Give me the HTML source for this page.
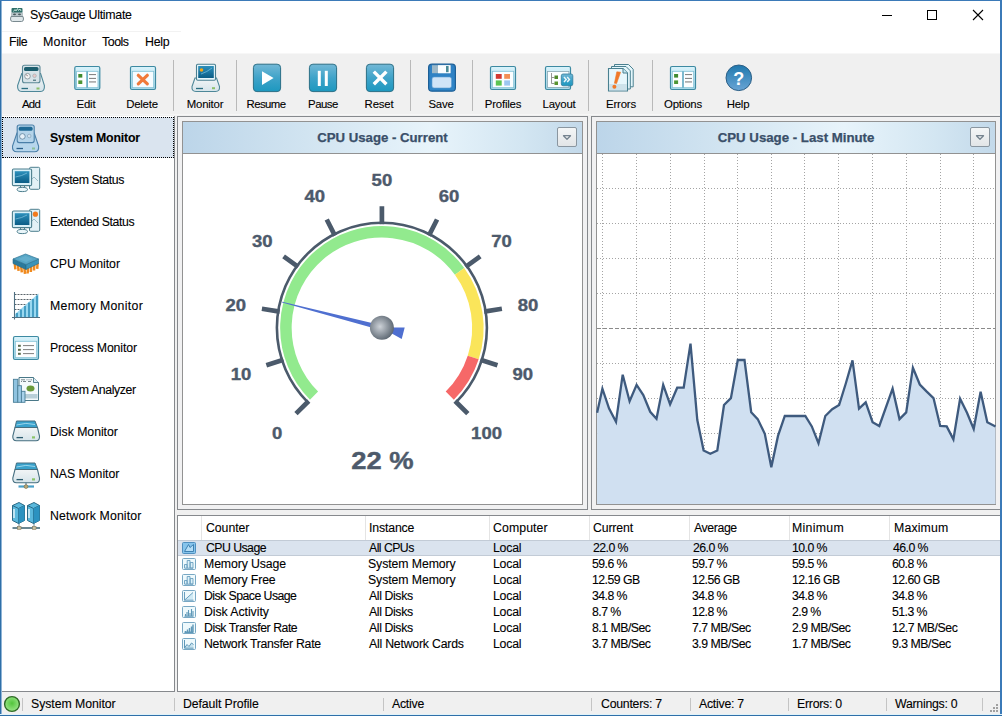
<!DOCTYPE html>
<html><head><meta charset="utf-8">
<style>
*{margin:0;padding:0;box-sizing:border-box}
html,body{width:1002px;height:716px;overflow:hidden;background:#f0f0f0;font-family:"Liberation Sans",sans-serif;font-size:12px;color:#000;-webkit-text-stroke:0.1px #000}
svg text{-webkit-text-stroke:0}
.a{position:absolute}
svg{position:absolute;overflow:visible}
#win{position:absolute;left:0;top:0;width:1002px;height:716px;background:#f0f0f0;overflow:hidden}
.mi{top:35px;font-size:12.4px;letter-spacing:-0.25px;line-height:14px;color:#000}
.tl{font-size:11.4px;letter-spacing:-0.2px;line-height:13px;color:#000;text-align:center;width:80px;top:98px;white-space:nowrap}
.sep{width:1px;background:#b9b9b9;top:60px;height:51px}
.si{left:50px;font-size:12.3px;letter-spacing:-0.25px;line-height:14px;white-space:nowrap;color:#000}
.frame{border:1px solid #86898d;background:#f1f1f2}
.box{border:1px solid #929292;background:#fff}
.hdr{height:32px;border-bottom:1px solid #929292;background:linear-gradient(90deg,#bcd5e9 0%,#d4e6f2 35%,#e8f4fb 62%,#d3e6f2 85%,#c3d9ea 100%);font-weight:bold;font-size:13.3px;color:#3b4f6b;text-align:center;line-height:31px;white-space:nowrap}
.dd{width:20px;height:20px;border:1px solid #8a96a0;border-radius:2px;background:linear-gradient(#f4f6f7,#e2e5e7)}
.st{top:697px;font-size:12.3px;letter-spacing:-0.25px;line-height:14px;white-space:nowrap}
.ss{width:1px;height:13px;top:698px;background:#c4c4c4}
.th{top:521px;font-size:12.3px;letter-spacing:-0.25px;line-height:14px;white-space:nowrap}
.hs{top:516px;width:1px;height:24px;background:#e4e4e4}
.td{font-size:12.3px;letter-spacing:-0.25px;line-height:14px;white-space:nowrap}
</style></head><body>
<div id="win">
<!-- chrome -->
<div class="a" style="left:1px;top:1px;width:999px;height:30px;background:#fff"></div>
<div class="a" style="left:1px;top:31px;width:999px;height:22px;background:#fff"></div>
<div class="a" style="left:1px;top:31px;width:180px;height:1px;background:#f2f2f2"></div>
<div class="a" style="left:1px;top:53px;width:999px;height:62px;background:#f0f0f0"></div>
<div class="a" style="left:1px;top:53px;width:999px;height:1px;background:#f7f7f7"></div>
<div class="a" style="left:1px;top:114px;width:999px;height:1px;background:#f6f6f6"></div>
<div class="a" style="left:30px;top:8px;font-size:12.4px;letter-spacing:-0.3px;line-height:14px">SysGauge Ultimate</div>
<svg style="left:0;top:0" width="30" height="30" viewBox="0 0 30 30">
 <rect x="11.5" y="8" width="11" height="5" rx="1" fill="#2f6f6a"/>
 <path d="M13.5,11.5l1.5,-2l1,1.5l1.5,-2.5l1,2l1.5,-1.5l1,2" stroke="#bfe0d8" stroke-width="1" fill="none"/>
 <rect x="11" y="12.5" width="12" height="4" fill="#b8c4c8"/>
 <ellipse cx="14.5" cy="14.3" rx="1.5" ry="0.9" fill="#4a5a5e"/><ellipse cx="19.5" cy="14.3" rx="1.5" ry="0.9" fill="#4a5a5e"/>
 <path d="M11,16.5 L10.5,19 Q10.5,21.5 12.5,21.5 H21.5 Q23.5,21.5 23.5,19 L23,16.5Z" fill="#dfe7ea" stroke="#7a8a90" stroke-width="1"/>
</svg>
<svg style="left:870px;top:0" width="132" height="32" viewBox="870 0 132 32">
 <path d="M882,15.5H892" stroke="#000" stroke-width="1"/>
 <rect x="927.5" y="10.5" width="9" height="9" stroke="#000" stroke-width="1" fill="none"/>
 <path d="M973,10L983,20M983,10L973,20" stroke="#000" stroke-width="1.1"/>
</svg>
<div class="a mi" style="left:9px;letter-spacing:-0.42px">File</div>
<div class="a mi" style="left:43px;letter-spacing:0.3px">Monitor</div>
<div class="a mi" style="left:102px;letter-spacing:-0.47px">Tools</div>
<div class="a mi" style="left:145px">Help</div>
<!-- toolbar separators -->
<div class="a sep" style="left:173px"></div>
<div class="a sep" style="left:236px"></div>
<div class="a sep" style="left:410px"></div>
<div class="a sep" style="left:472px"></div>
<div class="a sep" style="left:588px"></div>
<div class="a sep" style="left:652px"></div>
<!-- toolbar labels -->
<div class="a tl" style="left:-9px;letter-spacing:-0.7px">Add</div>
<div class="a tl" style="left:46px">Edit</div>
<div class="a tl" style="left:102px">Delete</div>
<div class="a tl" style="left:165px">Monitor</div>
<div class="a tl" style="left:226px;letter-spacing:-0.6px">Resume</div>
<div class="a tl" style="left:283px;letter-spacing:-0.5px">Pause</div>
<div class="a tl" style="left:339px">Reset</div>
<div class="a tl" style="left:401px">Save</div>
<div class="a tl" style="left:463px">Profiles</div>
<div class="a tl" style="left:519px">Layout</div>
<div class="a tl" style="left:581px">Errors</div>
<div class="a tl" style="left:643px">Options</div>
<div class="a tl" style="left:698px">Help</div>
<svg style="left:0;top:0" width="1" height="1">
<defs>
 <linearGradient id="tealbtn" x1="0" y1="0" x2="0" y2="1"><stop offset="0" stop-color="#73b8d6"/><stop offset="0.5" stop-color="#3fa3c9"/><stop offset="1" stop-color="#1d98bf"/></linearGradient>
 <linearGradient id="winttl" x1="0" y1="0" x2="0" y2="1"><stop offset="0" stop-color="#d9f3fb"/><stop offset="1" stop-color="#a9d9ea"/></linearGradient>
 <linearGradient id="scr" x1="0" y1="0" x2="0" y2="1"><stop offset="0" stop-color="#2d90bb"/><stop offset="1" stop-color="#0b5d86"/></linearGradient>
 <linearGradient id="floppy" x1="0" y1="0" x2="0" y2="1"><stop offset="0" stop-color="#2e7fc2"/><stop offset="1" stop-color="#2f86c8"/></linearGradient>
 <linearGradient id="helpg" x1="0" y1="0" x2="0" y2="1"><stop offset="0" stop-color="#1f78ad"/><stop offset="1" stop-color="#6aa5d5"/></linearGradient>
 <linearGradient id="diskbase" x1="0" y1="0" x2="0" y2="1"><stop offset="0" stop-color="#f2f5f6"/><stop offset="1" stop-color="#d6e4ea"/></linearGradient>
</defs>
</svg>
<!-- Add -->
<svg style="left:12px;top:58px" width="40" height="40" viewBox="0 0 40 40">
 <path d="M9.8,15.5 L5.6,27.5 Q5.2,33.5 9.8,33.5 H28.5 Q32.8,33.5 32.4,27.5 L28.6,15.5Z" fill="url(#diskbase)" stroke="#4d8798" stroke-width="1.1"/>
 <path d="M9.5,30.5 H16" stroke="#2b6e80" stroke-width="1.3"/><rect x="24.5" y="29.5" width="3" height="2" fill="#8cbf6a"/>
 <rect x="10.5" y="7.2" width="17.5" height="17.5" rx="2" fill="#d7e3e8" stroke="#5b8896" stroke-width="1.1"/>
 <rect x="12" y="9" width="14.5" height="4" rx="1.5" fill="#1c5e6e"/>
 <circle cx="15.5" cy="18.2" r="2.8" fill="#f5f5f5" stroke="#7a8c92" stroke-width="0.8"/><path d="M15.5,18.2l-1,-1.6" stroke="#6a4a4a" stroke-width="0.8"/>
 <circle cx="22.5" cy="17.8" r="1.8" fill="#e8c8c8" stroke="#9aa8ac" stroke-width="0.6"/>
 <path d="M21,22.2h3" stroke="#2b5a66" stroke-width="1"/>
</svg>
<!-- Edit -->
<svg style="left:68px;top:58px" width="40" height="40" viewBox="0 0 40 40">
 <rect x="6.8" y="8.5" width="25" height="23" rx="1.5" fill="url(#winttl)" stroke="#3d8aa2" stroke-width="1.2"/>
 <rect x="8.6" y="13.3" width="21.4" height="16.4" fill="#fcfeff" stroke="#7fc0d4" stroke-width="0.8"/>
 <rect x="18.3" y="13.3" width="1.6" height="16.4" fill="#5ea9c2"/>
 <rect x="10.3" y="16" width="4" height="3.6" fill="#3f8a2e"/><rect x="10.3" y="22.4" width="4" height="3.6" fill="#4d9635"/>
 <path d="M21,16.6h7M21,20.4h7" stroke="#6a6a6a" stroke-width="0.9"/><path d="M21,23.9h7" stroke="#a8a8a8" stroke-width="1.6"/>
</svg>
<!-- Delete -->
<svg style="left:123px;top:58px" width="40" height="40" viewBox="0 0 40 40">
 <rect x="7.5" y="8.5" width="25" height="23" rx="1.5" fill="url(#winttl)" stroke="#3d8aa2" stroke-width="1.2"/>
 <rect x="9.3" y="13.3" width="21.4" height="16.4" fill="#f6fcff" stroke="#7fc0d4" stroke-width="0.8"/>
 <path d="M15.3,17.3L24.3,25.8M24.3,17.3L15.3,25.8" stroke="#f07a3a" stroke-width="3.2" stroke-linecap="round"/>
</svg>
<!-- Monitor -->
<svg style="left:185px;top:58px" width="40" height="40" viewBox="0 0 40 40">
 <path d="M10,20 L7,28.5 Q6.5,33.5 11,33.5 H30.5 Q35,33.5 34.5,28.5 L31.5,20Z" fill="url(#diskbase)" stroke="#4d8798" stroke-width="1.1"/>
 <path d="M11,30.5 H18" stroke="#2b6e80" stroke-width="1.3"/><rect x="27" y="29.2" width="3" height="2" fill="#8cbf6a"/>
 <rect x="11.5" y="6.2" width="19" height="16" rx="1.2" fill="#e6f6fb" stroke="#4a7f90" stroke-width="1.1"/>
 <rect x="13.2" y="8" width="15.6" height="12" fill="url(#scr)"/>
 <path d="M16,16 Q22,14 27,10" stroke="#7cc4e2" stroke-width="1" fill="none" opacity="0.7"/>
 <circle cx="16.5" cy="12" r="1.8" fill="#f2a516"/>
</svg>
<!-- Resume -->
<svg style="left:247px;top:58px" width="40" height="40" viewBox="0 0 40 40">
 <rect x="6.4" y="6.2" width="27.2" height="27.4" rx="3.5" fill="url(#tealbtn)" stroke="#2b6f86" stroke-width="1"/>
 <path d="M15,13.3V26.9L26.6,20Z" fill="#fff"/>
</svg>
<!-- Pause -->
<svg style="left:303px;top:58px" width="40" height="40" viewBox="0 0 40 40">
 <rect x="6.4" y="6.2" width="27.2" height="27.4" rx="3.5" fill="url(#tealbtn)" stroke="#2b6f86" stroke-width="1"/>
 <rect x="14.8" y="12.8" width="3" height="15.2" fill="#fff"/><rect x="21.8" y="12.8" width="3" height="15.2" fill="#fff"/>
</svg>
<!-- Reset -->
<svg style="left:360px;top:58px" width="40" height="40" viewBox="0 0 40 40">
 <rect x="6.4" y="6.2" width="27.2" height="27.4" rx="3.5" fill="url(#tealbtn)" stroke="#2b6f86" stroke-width="1"/>
 <path d="M13.8,13.6L26.4,26.2M26.4,13.6L13.8,26.2" stroke="#fff" stroke-width="3.4"/>
</svg>
<!-- Save -->
<svg style="left:422px;top:58px" width="40" height="40" viewBox="0 0 40 40">
 <rect x="6.6" y="6.2" width="26.8" height="27" rx="3.5" fill="url(#floppy)" stroke="#1d5f96" stroke-width="1.2"/>
 <rect x="10" y="7.2" width="18.5" height="8" fill="#9cb8c8"/><rect x="16" y="7.2" width="12.5" height="8" fill="#fafdff"/>
 <rect x="24" y="8" width="2.6" height="6.2" fill="#4a8a96"/>
 <rect x="10" y="19" width="19.5" height="11" rx="2" fill="#cfe4f7" stroke="#5a9ad0" stroke-width="0.6"/>
</svg>
<!-- Profiles -->
<svg style="left:483px;top:58px" width="40" height="40" viewBox="0 0 40 40">
 <rect x="7.5" y="8.5" width="25" height="23" rx="1.5" fill="url(#winttl)" stroke="#3d8aa2" stroke-width="1.2"/>
 <rect x="9.3" y="13.3" width="21.4" height="16.4" fill="#fbfeff" stroke="#7fc0d4" stroke-width="0.8"/>
 <rect x="12.8" y="16" width="5.9" height="4.8" fill="#d23a32"/><rect x="21.2" y="16" width="5.8" height="4.8" fill="#f28f55"/>
 <rect x="12.8" y="22.4" width="5.9" height="5.2" fill="#5cc451"/><rect x="21.2" y="22.4" width="5.8" height="5.2" fill="#9cc6f0"/>
</svg>
<!-- Layout -->
<svg style="left:539px;top:58px" width="40" height="40" viewBox="0 0 40 40">
 <rect x="6.5" y="8.5" width="25" height="23" rx="1.5" fill="url(#winttl)" stroke="#3d8aa2" stroke-width="1.2"/>
 <rect x="8.5" y="13.5" width="21.4" height="16" fill="#fbfeff" stroke="#8aa8b4" stroke-width="0.8"/>
 <path d="M12.5,15V25.5H15.5M12.5,19.5H15.5" stroke="#8a8a8a" stroke-width="0.9" fill="none"/>
 <rect x="15.5" y="17.5" width="3.5" height="3.5" fill="#4f8a2a"/><rect x="15.5" y="23.5" width="3.5" height="3.5" fill="#5a9430"/>
 <rect x="22.3" y="16" width="11.5" height="11.8" rx="1.8" fill="url(#tealbtn)" stroke="#2f7c9c" stroke-width="0.8"/>
 <path d="M25,19l2.2,2.5l-2.2,2.5M28.2,19l2.2,2.5l-2.2,2.5" stroke="#e8f6fb" stroke-width="1.5" fill="none"/>
</svg>
<!-- Errors -->
<svg style="left:601px;top:58px" width="40" height="40" viewBox="0 0 40 40">
 <path d="M13.5,6.5H27.5L32.2,11.2V28.8H13.5Z" fill="#e4f6fb" stroke="#4a8090" stroke-width="1"/>
 <path d="M10.5,8.5H25L29.3,12.8V31H10.5Z" fill="#e4f6fb" stroke="#4a8090" stroke-width="1"/>
 <path d="M7.5,10.5H22L26.5,15V33H7.5Z" fill="#e8f7fc" stroke="#4a8090" stroke-width="1.1"/>
 <path d="M22,10.5V15H26.5" fill="#c6e8f2" stroke="#4a8090" stroke-width="1"/>
 <rect x="8.2" y="26" width="17.6" height="6.5" fill="#bcd4de" opacity="0.6"/>
 <path d="M15.8,13.8 L19.6,14.2 L15.6,25.5 L13.4,25.2Z" fill="#f07a2a" stroke="#f07a2a" stroke-width="0.6" stroke-linejoin="round"/>
 <circle cx="13.4" cy="28.8" r="2" fill="#f07a2a"/>
</svg>
<!-- Options -->
<svg style="left:663px;top:58px" width="40" height="40" viewBox="0 0 40 40">
 <rect x="7.5" y="8.5" width="25" height="23" rx="1.5" fill="url(#winttl)" stroke="#3d8aa2" stroke-width="1.2"/>
 <rect x="9.3" y="13.3" width="21.4" height="16.4" fill="#fcfeff" stroke="#7fc0d4" stroke-width="0.8"/>
 <rect x="19.2" y="13.3" width="1.6" height="16.4" fill="#5ea9c2"/>
 <rect x="11.1" y="16" width="4" height="3.6" fill="#3f8a2e"/><rect x="11.1" y="22.4" width="4" height="3.6" fill="#4d9635"/>
 <path d="M22,16.6h7M22,20.4h7" stroke="#6a6a6a" stroke-width="0.9"/><path d="M22,23.9h7" stroke="#a8a8a8" stroke-width="1.6"/>
</svg>
<!-- Help -->
<svg style="left:718px;top:58px" width="40" height="40" viewBox="0 0 40 40">
 <circle cx="20.8" cy="19.8" r="12.8" fill="url(#helpg)" stroke="#2c5f86" stroke-width="1"/>
 <text x="20.8" y="27.2" text-anchor="middle" font-family="Liberation Sans" font-weight="bold" font-size="18" fill="#fff">?</text>
</svg>
<!-- sidebar -->
<div class="a" style="left:1px;top:116px;width:174px;height:576px;background:#fff"></div>
<div class="a" style="left:174px;top:116px;width:1px;height:576px;background:#86898d"></div>
<div class="a" style="left:1px;top:691px;width:174px;height:1px;background:#86898d"></div>
<div class="a" style="left:2px;top:117px;width:172px;height:41px;background:#dae4ef;border:1px dotted #000"></div>
<div class="a si" style="left:50px;top:131px;font-weight:bold;letter-spacing:-0.17px">System Monitor</div>
<div class="a si" style="top:173px;letter-spacing:-0.41px">System Status</div>
<div class="a si" style="top:215px;letter-spacing:-0.4px">Extended Status</div>
<div class="a si" style="top:257px;letter-spacing:-0.04px">CPU Monitor</div>
<div class="a si" style="top:299px;letter-spacing:0.3px">Memory Monitor</div>
<div class="a si" style="top:341px;letter-spacing:-0.13px">Process Monitor</div>
<div class="a si" style="top:383px;letter-spacing:-0.39px">System Analyzer</div>
<div class="a si" style="top:425px;letter-spacing:-0.04px">Disk Monitor</div>
<div class="a si" style="top:467px;letter-spacing:-0.03px">NAS Monitor</div>
<div class="a si" style="top:509px;letter-spacing:0.13px">Network Monitor</div>
<!-- s1 system monitor (blue tinted) -->
<svg style="left:6px;top:118px" width="40" height="40" viewBox="0 0 40 40">
 <path d="M11,15 L6.5,28 Q6,33.8 11,33.8 H28.5 Q33.2,33.8 32.6,28 L28.2,15Z" fill="#b7d6ec" stroke="#4a7fa8" stroke-width="1.1"/>
 <path d="M10.5,30.5 H17" stroke="#2a5f8a" stroke-width="1.3"/><rect x="26" y="29.5" width="3" height="2" fill="#8cbf9a"/>
 <rect x="11.2" y="7" width="17" height="17.6" rx="2" fill="#b5d4ea" stroke="#4a7fa8" stroke-width="1.1"/>
 <rect x="12.8" y="8.8" width="13.8" height="4" rx="1.5" fill="#1f6a96"/>
 <circle cx="16.4" cy="18.4" r="2.8" fill="#e6f0f8" stroke="#5a7f9a" stroke-width="0.8"/>
 <circle cx="23.2" cy="18" r="1.8" fill="#cfe0ee" stroke="#7a98ae" stroke-width="0.6"/>
</svg>
<!-- s2 system status -->
<svg style="left:6px;top:160px" width="40" height="40" viewBox="0 0 40 40">
 <rect x="23.5" y="7.3" width="10.2" height="22" rx="1.2" fill="#e2f1f6" stroke="#4d7f8e" stroke-width="1"/>
 <path d="M25,20 l3,-3 l4,4" stroke="#8ab0bc" stroke-width="0.8" fill="none"/>
 <rect x="6.4" y="9" width="19.2" height="16.6" rx="1.2" fill="#d8f0f8" stroke="#4d7f8e" stroke-width="1.1"/>
 <rect x="8.8" y="11.2" width="14.6" height="11.8" fill="url(#scr)"/>
 <path d="M9.5,17 Q16,16 21,13" stroke="#8ccbe4" stroke-width="0.9" fill="none" opacity="0.7"/>
 <path d="M14.5,25.6 V28 M18.5,25.6 V28" stroke="#4d7f8e" stroke-width="1"/>
 <ellipse cx="16.3" cy="29.5" rx="5.2" ry="2.1" fill="#eaf6fa" stroke="#4d7f8e" stroke-width="1"/>
</svg>
<!-- s3 extended status -->
<svg style="left:6px;top:202px" width="40" height="40" viewBox="0 0 40 40">
 <rect x="23.5" y="7.3" width="10.2" height="22" rx="1.2" fill="#e2f1f6" stroke="#4d7f8e" stroke-width="1"/>
 <path d="M25,20 l3,-3 l4,4" stroke="#8ab0bc" stroke-width="0.8" fill="none"/>
 <circle cx="29.4" cy="12.2" r="2.6" fill="#f27a1c"/>
 <rect x="6.4" y="9" width="19.2" height="16.6" rx="1.2" fill="#d8f0f8" stroke="#4d7f8e" stroke-width="1.1"/>
 <rect x="8.8" y="11.2" width="14.6" height="11.8" fill="url(#scr)"/>
 <path d="M9.5,17 Q16,16 21,13" stroke="#8ccbe4" stroke-width="0.9" fill="none" opacity="0.7"/>
 <path d="M14.5,25.6 V28 M18.5,25.6 V28" stroke="#4d7f8e" stroke-width="1"/>
 <ellipse cx="16.3" cy="29.5" rx="5.2" ry="2.1" fill="#eaf6fa" stroke="#4d7f8e" stroke-width="1"/>
</svg>
<!-- s4 cpu -->
<svg style="left:6px;top:244px" width="40" height="40" viewBox="0 0 40 40">
 <path d="M8.8,19.3l0.6,6M12.0,20.8l0.6,6M15.2,22.3l0.6,6M18.4,23.8l0.6,6M22.0,23.5l-0.4,6M25.2,22.0l-0.4,6M28.4,20.5l-0.4,6M31.6,18.9l-0.4,6" stroke="#f08a1e" stroke-width="2.5" fill="none"/>
 <path d="M7,15 L20,20.5 L20,25.5 L7,19.5Z" fill="#2a7a9c" stroke="#276a86" stroke-width="0.6"/>
 <path d="M20,20.5 L32.5,15 L32.5,19.5 L20,25.5Z" fill="#3a93b8" stroke="#276a86" stroke-width="0.6"/>
 <path d="M7,15 L19.5,10 L32.5,15 L20,20.5Z" fill="#57a6c6" stroke="#2f7595" stroke-width="0.7"/>
 <path d="M12,15 L19.5,12 L27,15 L20,18Z" fill="#6cb6d2" opacity="0.6"/>
</svg>
<!-- s5 memory -->
<svg style="left:6px;top:286px" width="40" height="40" viewBox="0 0 40 40">
 <path d="M8.5,8.5 H32 M8.5,13.5 H28 M8.5,18.5 H24 M8.5,23.5 H16" stroke="#5a646a" stroke-width="1" stroke-dasharray="2 1" fill="none"/>
 <path d="M8.5,28.5 L32.5,7.5 V31.5 H8.5Z" fill="#9ad8f0"/>
 <path d="M11,31.5V27 M15,31.5V23.5 M19,31.5V20 M23,31.5V16.5 M27,31.5V13 M31,31.5V9.5" stroke="#3190ba" stroke-width="1.6"/>
 <path d="M8.5,6 V33.5 M6,31.5 H34" stroke="#4e6f82" stroke-width="1.1"/>
</svg>
<!-- s6 process -->
<svg style="left:6px;top:328px" width="40" height="40" viewBox="0 0 40 40">
 <rect x="7.5" y="8.5" width="25" height="23" rx="1.5" fill="url(#winttl)" stroke="#3d8aa2" stroke-width="1.2"/>
 <rect x="9.3" y="13.3" width="21.4" height="16.4" fill="#fcfeff" stroke="#7fc0d4" stroke-width="0.8"/>
 <rect x="12" y="16.8" width="2.8" height="2" fill="#5a6a4a"/><rect x="12" y="20.8" width="2.8" height="2" fill="#5a6a4a"/><rect x="12" y="24.8" width="2.8" height="2" fill="#5a6a4a"/>
 <path d="M17,17.6h11M17,21.6h11M17,25.6h11" stroke="#707070" stroke-width="0.9"/>
</svg>
<!-- s7 analyzer -->
<svg style="left:6px;top:370px" width="40" height="40" viewBox="0 0 40 40">
 <path d="M13,7.5H27.5L32.5,12.5V30.5H13Z" fill="#f4fafc" stroke="#4a7888" stroke-width="1"/>
 <path d="M27.5,7.5V12.5H32.5" fill="#dfeff5" stroke="#4a7888" stroke-width="0.9"/>
 <path d="M15,9.8h4 M20.5,9.8h1 M22.5,9.8h1 M24.5,9.8h1.5 M15,11.5h1 M17,11.5h3 M22,11.5h3" stroke="#5a6a70" stroke-width="0.8"/>
 <ellipse cx="24.5" cy="18.5" rx="4" ry="3" fill="#6a9a3a"/>
 <rect x="19" y="24" width="12.5" height="4.5" fill="#b8cfd8"/>
 <rect x="7.4" y="9.3" width="4.4" height="23" fill="#8fc3e0" stroke="#4a7f98" stroke-width="0.9"/>
 <rect x="11.8" y="15.7" width="3.6" height="16.6" fill="#9ccbe6" stroke="#4a7f98" stroke-width="0.9"/>
 <rect x="15.4" y="21.3" width="3.6" height="11" fill="#a8d2ea" stroke="#4a7f98" stroke-width="0.9"/>
</svg>
<!-- s8 disk -->
<svg style="left:6px;top:412px" width="40" height="40" viewBox="0 0 40 40">
 <path d="M10.5,9 H29 L31.5,15.5 V15.5 H9Z" fill="#3aa2cc" stroke="#466f80" stroke-width="1"/>
 <path d="M10.5,13 Q20,10 29,12.5" stroke="#9ad6ec" stroke-width="1" fill="none"/>
 <path d="M9,15.5 L6.8,24 Q6.5,28.8 10.5,28.8 H30 Q33.8,28.8 33.5,24 L31.5,15.5Z" fill="url(#diskbase)" stroke="#466f80" stroke-width="1.1"/>
 <path d="M10.5,25.6 H17" stroke="#2b5a6e" stroke-width="1.3"/><rect x="26" y="24.3" width="3" height="2.2" fill="#8cc46a"/>
</svg>
<!-- s9 nas -->
<svg style="left:6px;top:454px" width="40" height="40" viewBox="0 0 40 40">
 <path d="M10.5,9 H29 L31.5,15.5 H9Z" fill="#3aa2cc" stroke="#466f80" stroke-width="1"/>
 <path d="M10.5,13 Q20,10 29,12.5" stroke="#9ad6ec" stroke-width="1" fill="none"/>
 <path d="M9,15.5 L6.8,24 Q6.5,28.8 10.5,28.8 H30 Q33.8,28.8 33.5,24 L31.5,15.5Z" fill="url(#diskbase)" stroke="#466f80" stroke-width="1.1"/>
 <path d="M10.5,25.6 H17" stroke="#2b5a6e" stroke-width="1.3"/><rect x="26" y="24.3" width="3" height="2.2" fill="#8cc46a"/>
 <path d="M20,28.8 V31.5" stroke="#466f80" stroke-width="1"/>
 <path d="M12.5,32.5 H28" stroke="#4aa0c8" stroke-width="2.2"/>
 <circle cx="20" cy="32.6" r="1.9" fill="#b8a878" stroke="#7a6a40" stroke-width="0.6"/>
</svg>
<!-- s10 network -->
<svg style="left:6px;top:496px" width="40" height="40" viewBox="0 0 40 40">
 <path d="M13,26 V31.5 M28,26 V31.5" stroke="#6a8a96" stroke-width="1"/>
 <path d="M6.5,32 H34" stroke="#5a7a86" stroke-width="1.8"/>
 <rect x="11.5" y="30.5" width="3.5" height="3" fill="#c8c0a0" stroke="#7a7050" stroke-width="0.5"/><rect x="26.5" y="30.5" width="3.5" height="3" fill="#c8c0a0" stroke="#7a7050" stroke-width="0.5"/>
 <path d="M6.5,9.5 L13,6.5 L18.5,9.5 V24.5 L12.5,27.5 L6.5,24.5Z" fill="#5ab8dc" stroke="#2a6a86" stroke-width="1"/>
 <path d="M6.5,9.5 L12.5,12.5 L18.5,9.5 M12.5,12.5 V27.5" stroke="#2a6a86" stroke-width="1" fill="none"/>
 <path d="M12.5,12.5 L18.5,9.5 V24.5 L12.5,27.5Z" fill="#2b92c0"/>
 <path d="M8,13 V22" stroke="#e0f4fb" stroke-width="1.5"/>
 <path d="M21.5,9.5 L28,6.5 L33.5,9.5 V24.5 L27.5,27.5 L21.5,24.5Z" fill="#5ab8dc" stroke="#2a6a86" stroke-width="1"/>
 <path d="M21.5,9.5 L27.5,12.5 L33.5,9.5 M27.5,12.5 V27.5" stroke="#2a6a86" stroke-width="1" fill="none"/>
 <path d="M27.5,12.5 L33.5,9.5 V24.5 L27.5,27.5Z" fill="#2b92c0"/>
 <path d="M23,13 V22" stroke="#e0f4fb" stroke-width="1.5"/>
</svg>
<!-- gauge panel -->
<div class="a frame" style="left:177px;top:116px;width:411px;height:394px"></div>
<div class="a box" style="left:182px;top:121px;width:401px;height:384px"></div>
<div class="a hdr" style="left:183px;top:122px;width:399px"></div><svg style="left:183px;top:122px" width="399" height="32" viewBox="0 0 399 32"><text x="134.2" y="19.7" textLength="130.5" lengthAdjust="spacingAndGlyphs" font-family="Liberation Sans" font-weight="bold" font-size="12.4" fill="#3a4f69" stroke="#3a4f69" stroke-width="0.25">CPU Usage - Current</text></svg>
<div class="a dd" style="left:557px;top:127px"></div><svg style="left:557px;top:127px" width="20" height="19" viewBox="0 0 20 19"><path d="M6.5,8.7H13.5L10,12.3Z" fill="none" stroke="#75838f" stroke-width="1.3" stroke-linejoin="round"/></svg>
<svg style="left:183px;top:154px" width="399" height="350" viewBox="183 154 399 350"><defs><radialGradient id="hub" cx="0.42" cy="0.45" r="0.62"><stop offset="0" stop-color="#cdd2d8"/><stop offset="1" stop-color="#56616c"/></radialGradient></defs><path d="M314.02,395.68 A96,96 0 1 1 459.57,271.37" stroke="#92ea8e" stroke-width="11.5" fill="none"/><path d="M459.57,271.37 A96,96 0 0 1 473.20,357.47" stroke="#fae55a" stroke-width="11.5" fill="none"/><path d="M473.20,357.47 A96,96 0 0 1 449.78,395.68" stroke="#f66868" stroke-width="11.5" fill="none"/><path d="M307.65,402.05 A105,105 0 1 1 456.15,402.05" stroke="#4b5a6b" stroke-width="2.6" fill="none"/><path d="M308.71,400.99L295.99,413.71M283.47,359.78L266.35,365.35M279.67,311.61L261.90,308.79M298.17,266.96L283.60,256.38M334.91,235.58L326.74,219.54M381.90,224.30L381.90,206.30M428.89,235.58L437.06,219.54M465.63,266.96L480.20,256.38M484.13,311.61L501.90,308.79M480.33,359.78L497.45,365.35M455.09,400.99L467.81,413.71" stroke="#4b5a6b" stroke-width="4.7" fill="none"/><g font-family="Liberation Sans" font-weight="bold" font-size="15.8" fill="#4d5a6b" stroke="#4d5a6b" stroke-width="0.35"><text x="272.1" y="439.0" textLength="10.3" lengthAdjust="spacingAndGlyphs">0</text><text x="230.8" y="380.0" textLength="20.6" lengthAdjust="spacingAndGlyphs">10</text><text x="225.4" y="311.1" textLength="20.6" lengthAdjust="spacingAndGlyphs">20</text><text x="251.9" y="247.3" textLength="20.6" lengthAdjust="spacingAndGlyphs">30</text><text x="304.4" y="202.4" textLength="20.6" lengthAdjust="spacingAndGlyphs">40</text><text x="371.6" y="186.3" textLength="20.6" lengthAdjust="spacingAndGlyphs">50</text><text x="438.8" y="202.4" textLength="20.6" lengthAdjust="spacingAndGlyphs">60</text><text x="491.3" y="247.3" textLength="20.6" lengthAdjust="spacingAndGlyphs">70</text><text x="517.8" y="311.1" textLength="20.6" lengthAdjust="spacingAndGlyphs">80</text><text x="512.4" y="380.0" textLength="20.6" lengthAdjust="spacingAndGlyphs">90</text><text x="471.1" y="439.0" textLength="30.9" lengthAdjust="spacingAndGlyphs">100</text></g><polygon points="282.24,301.80 382.52,325.38 392.27,327.62 404.70,327.46 401.72,339.08 390.90,332.95 381.28,330.22 282.04,302.57" fill="#4f6fd0"/><circle cx="381.9" cy="327.8" r="12" fill="url(#hub)"/><text x="351.2" y="469.3" textLength="62.4" lengthAdjust="spacingAndGlyphs" font-family="Liberation Sans" font-weight="bold" font-size="24.4" fill="#4d5a6b" stroke="#4d5a6b" stroke-width="0.4">22 %</text></svg>
<!-- chart panel -->
<div class="a frame" style="left:591px;top:116px;width:411px;height:394px"></div>
<div class="a box" style="left:596px;top:121px;width:400px;height:384px"></div>
<div class="a hdr" style="left:597px;top:122px;width:398px"></div><svg style="left:597px;top:122px" width="398" height="32" viewBox="0 0 398 32"><text x="120.7" y="19.7" textLength="156.7" lengthAdjust="spacingAndGlyphs" font-family="Liberation Sans" font-weight="bold" font-size="12.4" fill="#3a4f69" stroke="#3a4f69" stroke-width="0.25">CPU Usage - Last Minute</text></svg>
<div class="a dd" style="left:970px;top:127px"></div><svg style="left:970px;top:127px" width="20" height="19" viewBox="0 0 20 19"><path d="M6.5,8.7H13.5L10,12.3Z" fill="none" stroke="#75838f" stroke-width="1.3" stroke-linejoin="round"/></svg>
<svg style="left:597px;top:154px" width="398" height="350" viewBox="597 154 398 350"><path d="M602.5,154V504M636.5,154V504M670.5,154V504M704.5,154V504M737.5,154V504M771.5,154V504M804.5,154V504M838.5,154V504M872.5,154V504M906.5,154V504M940.5,154V504M973.5,154V504" stroke="#a4a4a4" stroke-width="1" stroke-dasharray="1 2" fill="none"/><path d="M597,188.5H995M597,223.5H995M597,258.5H995M597,293.5H995M597,363.5H995M597,398.5H995M597,433.5H995M597,468.5H995" stroke="#a4a4a4" stroke-width="1" stroke-dasharray="1 2" fill="none"/><path d="M597,328.5H995" stroke="#8a8a8a" stroke-width="1" stroke-dasharray="4 2" fill="none"/><path d="M597.1,412.8 L602.4,388.7 L609.1,408.6 L616.0,421.8 L622.7,374.7 L629.6,401.3 L636.6,384.9 L643.3,395.0 L650.2,411.8 L656.5,418.7 L663.2,384.9 L670.1,404.4 L677.2,387.7 L683.7,387.7 L690.5,343.6 L697.3,420.1 L703.6,450.5 L710.3,453.7 L717.3,450.5 L724.0,405.0 L730.9,398.1 L737.8,360.0 L744.5,360.0 L751.2,412.2 L757.7,419.1 L764.8,433.8 L771.3,467.3 L778.0,435.9 L784.8,416.0 L791.7,416.0 L798.6,416.0 L805.3,416.0 L811.8,426.4 L818.5,443.2 L825.3,416.0 L832.2,409.2 L839.1,405.0 L845.8,383.5 L852.5,360.4 L859.0,408.6 L865.7,402.3 L872.6,422.2 L879.3,426.0 L892.6,388.7 L899.5,419.1 L906.2,412.4 L912.9,367.7 L919.8,384.5 L926.5,391.4 L933.5,398.1 L940.2,426.0 L946.7,426.4 L953.4,439.4 L960.1,398.8 L967.0,412.8 L973.7,429.0 L980.6,391.8 L987.3,422.2 L995.5,426.4 L995.5,504 L597,504 Z" fill="#d0e0f1"/><path d="M597.1,412.8 L602.4,388.7 L609.1,408.6 L616.0,421.8 L622.7,374.7 L629.6,401.3 L636.6,384.9 L643.3,395.0 L650.2,411.8 L656.5,418.7 L663.2,384.9 L670.1,404.4 L677.2,387.7 L683.7,387.7 L690.5,343.6 L697.3,420.1 L703.6,450.5 L710.3,453.7 L717.3,450.5 L724.0,405.0 L730.9,398.1 L737.8,360.0 L744.5,360.0 L751.2,412.2 L757.7,419.1 L764.8,433.8 L771.3,467.3 L778.0,435.9 L784.8,416.0 L791.7,416.0 L798.6,416.0 L805.3,416.0 L811.8,426.4 L818.5,443.2 L825.3,416.0 L832.2,409.2 L839.1,405.0 L845.8,383.5 L852.5,360.4 L859.0,408.6 L865.7,402.3 L872.6,422.2 L879.3,426.0 L892.6,388.7 L899.5,419.1 L906.2,412.4 L912.9,367.7 L919.8,384.5 L926.5,391.4 L933.5,398.1 L940.2,426.0 L946.7,426.4 L953.4,439.4 L960.1,398.8 L967.0,412.8 L973.7,429.0 L980.6,391.8 L987.3,422.2 L995.5,426.4" stroke="#3e5a7e" stroke-width="2.3" stroke-linejoin="miter" fill="none"/></svg>
<!-- table -->
<div class="a" style="left:177px;top:515px;width:824px;height:177px;background:#fff;border:1px solid #86898d"></div>
<div class="a hs" style="left:201px"></div>
<div class="a hs" style="left:365px"></div>
<div class="a hs" style="left:489px"></div>
<div class="a hs" style="left:589px"></div>
<div class="a hs" style="left:689px"></div>
<div class="a hs" style="left:789px"></div>
<div class="a hs" style="left:889px"></div>
<div class="a" style="left:178px;top:540px;width:823px;height:16px;background:#dae3ee;border-top:1px solid #c2cbd6;border-bottom:1px solid #c2cbd6"></div>
<svg style="left:182px;top:542px" width="14" height="12" viewBox="0 0 14 12"><rect x="0.5" y="0.5" width="13" height="11" rx="1" fill="#86c4ec" stroke="#4f8fbf" stroke-width="1"/><path d="M2.5,9.5 L6.5,2.5 L8,5.5 L11.5,2.5 V9.5Z" fill="#b4ddf6" stroke="#3f82b3" stroke-width="1" stroke-linejoin="round"/></svg>
<svg style="left:182px;top:558px" width="14" height="12" viewBox="0 0 14 12"><rect x="0.5" y="0.5" width="13" height="11" rx="1" fill="#eef9fc" stroke="#78a8c4" stroke-width="1"/><path d="M2.5,10V6.5H5V10M5.2,10V2.5H8V10M8.2,10V4.5H11V10Z" stroke="#6a9fbf" stroke-width="0.9" fill="#dcf1f8"/><path d="M2.5,10.2H11.2" stroke="#6a9fbf" stroke-width="1"/></svg>
<svg style="left:182px;top:574px" width="14" height="12" viewBox="0 0 14 12"><rect x="0.5" y="0.5" width="13" height="11" rx="1" fill="#eef9fc" stroke="#78a8c4" stroke-width="1"/><path d="M2.5,10V6.5H5V10M5.2,10V2.5H8V10M8.2,10V4.5H11V10Z" stroke="#6a9fbf" stroke-width="0.9" fill="#dcf1f8"/><path d="M2.5,10.2H11.2" stroke="#6a9fbf" stroke-width="1"/></svg>
<svg style="left:182px;top:590px" width="14" height="12" viewBox="0 0 14 12"><rect x="0.5" y="0.5" width="13" height="11" rx="1" fill="#eef9fc" stroke="#78a8c4" stroke-width="1"/><path d="M2.5,10.2 L11,2.5 V10.2Z" fill="#cfeaf5"/><path d="M2.5,2V10.2H11.5M2.5,10.2L11,2.5" stroke="#6a9fbf" stroke-width="1" fill="none"/></svg>
<svg style="left:182px;top:606px" width="14" height="12" viewBox="0 0 14 12"><rect x="0.5" y="0.5" width="13" height="11" rx="1" fill="#eef9fc" stroke="#78a8c4" stroke-width="1"/><path d="M2.5,10.3H11.5M3.5,10V8M5,10V6M6.5,10V4M8,10V7M9.5,10V3M11,10V5" stroke="#5f98b8" stroke-width="1.1" fill="none"/></svg>
<svg style="left:182px;top:622px" width="14" height="12" viewBox="0 0 14 12"><rect x="0.5" y="0.5" width="13" height="11" rx="1" fill="#eef9fc" stroke="#78a8c4" stroke-width="1"/><path d="M2.5,10.3H11.5M3.5,10V9M5.5,10V7.5M7.5,10V6M9.5,10V4.5M11,10V2.5" stroke="#5f98b8" stroke-width="1.4" fill="none"/></svg>
<svg style="left:182px;top:638px" width="14" height="12" viewBox="0 0 14 12"><rect x="0.5" y="0.5" width="13" height="11" rx="1" fill="#eef9fc" stroke="#78a8c4" stroke-width="1"/><path d="M2.5,10.2L5,6.5L7,8.5L9.5,5L11.5,6.5V10.2Z" fill="#c6e2ee"/><path d="M2.5,2V10.2H11.5M2.5,10L5,6.5L7,8.5L9.5,5L11.5,6.5" stroke="#5f98b8" stroke-width="1" fill="none"/></svg>
<div class="a th" id="h0" style="left:206px;top:521px;letter-spacing:-0.050px">Counter</div>
<div class="a th" id="h1" style="left:369px;top:521px;letter-spacing:-0.150px">Instance</div>
<div class="a th" id="h2" style="left:493px;top:521px;letter-spacing:0.093px">Computer</div>
<div class="a th" id="h3" style="left:593px;top:521px;letter-spacing:-0.150px">Current</div>
<div class="a th" id="h4" style="left:694px;top:521px;letter-spacing:-0.400px">Average</div>
<div class="a th" id="h5" style="left:792px;top:521px;letter-spacing:0.300px">Minimum</div>
<div class="a th" id="h6" style="left:894px;top:521px;letter-spacing:0.150px">Maximum</div>
<div class="a td" id="r0c0" style="left:206px;top:541px;letter-spacing:-0.550px">CPU Usage</div>
<div class="a td" id="r0c1" style="left:369px;top:541px;letter-spacing:-0.550px">All CPUs</div>
<div class="a td" id="r0c2" style="left:493px;top:541px;letter-spacing:-0.225px">Local</div>
<div class="a td" id="r0c3" style="left:593px;top:541px;letter-spacing:-0.550px">22.0 %</div>
<div class="a td" id="r0c4" style="left:693px;top:541px;letter-spacing:-0.550px">26.0 %</div>
<div class="a td" id="r0c5" style="left:792px;top:541px;letter-spacing:-0.550px">10.0 %</div>
<div class="a td" id="r0c6" style="left:893px;top:541px;letter-spacing:-0.550px">46.0 %</div>
<div class="a td" id="r1c0" style="left:204px;top:557px;letter-spacing:-0.114px">Memory Usage</div>
<div class="a td" id="r1c1" style="left:368px;top:557px;letter-spacing:-0.092px">System Memory</div>
<div class="a td" id="r1c2" style="left:493px;top:557px;letter-spacing:-0.225px">Local</div>
<div class="a td" id="r1c3" style="left:592px;top:557px;letter-spacing:-0.550px">59.6 %</div>
<div class="a td" id="r1c4" style="left:692px;top:557px;letter-spacing:-0.550px">59.7 %</div>
<div class="a td" id="r1c5" style="left:792px;top:557px;letter-spacing:-0.550px">59.5 %</div>
<div class="a td" id="r1c6" style="left:892px;top:557px;letter-spacing:-0.550px">60.8 %</div>
<div class="a td" id="r2c0" style="left:204px;top:573px;letter-spacing:-0.140px">Memory Free</div>
<div class="a td" id="r2c1" style="left:368px;top:573px;letter-spacing:-0.092px">System Memory</div>
<div class="a td" id="r2c2" style="left:493px;top:573px;letter-spacing:-0.225px">Local</div>
<div class="a td" id="r2c3" style="left:592px;top:573px;letter-spacing:-0.550px">12.59 GB</div>
<div class="a td" id="r2c4" style="left:692px;top:573px;letter-spacing:-0.550px">12.56 GB</div>
<div class="a td" id="r2c5" style="left:792px;top:573px;letter-spacing:-0.550px">12.16 GB</div>
<div class="a td" id="r2c6" style="left:892px;top:573px;letter-spacing:-0.550px">12.60 GB</div>
<div class="a td" id="r3c0" style="left:204px;top:589px;letter-spacing:-0.550px">Disk Space Usage</div>
<div class="a td" id="r3c1" style="left:369px;top:589px;letter-spacing:-0.388px">All Disks</div>
<div class="a td" id="r3c2" style="left:493px;top:589px;letter-spacing:-0.225px">Local</div>
<div class="a td" id="r3c3" style="left:592px;top:589px;letter-spacing:-0.550px">34.8 %</div>
<div class="a td" id="r3c4" style="left:692px;top:589px;letter-spacing:-0.550px">34.8 %</div>
<div class="a td" id="r3c5" style="left:792px;top:589px;letter-spacing:-0.550px">34.8 %</div>
<div class="a td" id="r3c6" style="left:892px;top:589px;letter-spacing:-0.550px">34.8 %</div>
<div class="a td" id="r4c0" style="left:204px;top:605px;letter-spacing:-0.058px">Disk Activity</div>
<div class="a td" id="r4c1" style="left:369px;top:605px;letter-spacing:-0.388px">All Disks</div>
<div class="a td" id="r4c2" style="left:493px;top:605px;letter-spacing:-0.225px">Local</div>
<div class="a td" id="r4c3" style="left:592px;top:605px;letter-spacing:-0.550px">8.7 %</div>
<div class="a td" id="r4c4" style="left:692px;top:605px;letter-spacing:-0.550px">12.8 %</div>
<div class="a td" id="r4c5" style="left:792px;top:605px;letter-spacing:-0.550px">2.9 %</div>
<div class="a td" id="r4c6" style="left:892px;top:605px;letter-spacing:-0.550px">51.3 %</div>
<div class="a td" id="r5c0" style="left:204px;top:621px;letter-spacing:-0.479px">Disk Transfer Rate</div>
<div class="a td" id="r5c1" style="left:369px;top:621px;letter-spacing:-0.388px">All Disks</div>
<div class="a td" id="r5c2" style="left:493px;top:621px;letter-spacing:-0.225px">Local</div>
<div class="a td" id="r5c3" style="left:592px;top:621px;letter-spacing:-0.506px">8.1 MB/Sec</div>
<div class="a td" id="r5c4" style="left:692px;top:621px;letter-spacing:-0.483px">7.7 MB/Sec</div>
<div class="a td" id="r5c5" style="left:792px;top:621px;letter-spacing:-0.506px">2.9 MB/Sec</div>
<div class="a td" id="r5c6" style="left:892px;top:621px;letter-spacing:-0.460px">12.7 MB/Sec</div>
<div class="a td" id="r6c0" style="left:204px;top:637px;letter-spacing:-0.295px">Network Transfer Rate</div>
<div class="a td" id="r6c1" style="left:369px;top:637px;letter-spacing:-0.219px">All Network Cards</div>
<div class="a td" id="r6c2" style="left:493px;top:637px;letter-spacing:-0.225px">Local</div>
<div class="a td" id="r6c3" style="left:592px;top:637px;letter-spacing:-0.506px">3.7 MB/Sec</div>
<div class="a td" id="r6c4" style="left:692px;top:637px;letter-spacing:-0.483px">3.9 MB/Sec</div>
<div class="a td" id="r6c5" style="left:792px;top:637px;letter-spacing:-0.506px">1.7 MB/Sec</div>
<div class="a td" id="r6c6" style="left:892px;top:637px;letter-spacing:-0.483px">9.3 MB/Sec</div>
<!-- status bar -->
<div class="a" style="left:1px;top:692px;width:999px;height:22px;background:#f0f0f0"></div>
<svg style="left:0;top:692px" width="24" height="22" viewBox="0 0 24 22">
 <defs><radialGradient id="grn" cx="0.5" cy="0.45" r="0.55"><stop offset="0" stop-color="#52c43c"/><stop offset="0.6" stop-color="#7ed96a"/><stop offset="1" stop-color="#9be68a"/></radialGradient></defs>
 <circle cx="12" cy="12" r="7.4" fill="url(#grn)" stroke="#2f6a26" stroke-width="1.4"/>
</svg>
<div class="a ss" style="left:22px"></div>
<div class="a st" style="left:31px;letter-spacing:-0.06px">System Monitor</div>
<div class="a ss" style="left:174px"></div>
<div class="a st" style="left:183px;letter-spacing:-0.1px">Default Profile</div>
<div class="a ss" style="left:383px"></div>
<div class="a st" style="left:392px">Active</div>
<div class="a ss" style="left:591px"></div>
<div class="a st" style="left:601px">Counters: 7</div>
<div class="a ss" style="left:690px"></div>
<div class="a st" style="left:699px">Active: 7</div>
<div class="a ss" style="left:788px"></div>
<div class="a st" style="left:797px">Errors: 0</div>
<div class="a ss" style="left:886px"></div>
<div class="a st" style="left:895px">Warnings: 0</div>
<div class="a ss" style="left:982px"></div>
<svg style="left:986px;top:702px" width="14" height="12" viewBox="0 0 14 12">
 <rect x="10" y="2" width="2" height="2" fill="#a0a0a0"/><rect x="7" y="5" width="2" height="2" fill="#a0a0a0"/><rect x="10" y="5" width="2" height="2" fill="#a0a0a0"/>
 <rect x="4" y="8" width="2" height="2" fill="#a0a0a0"/><rect x="7" y="8" width="2" height="2" fill="#a0a0a0"/><rect x="10" y="8" width="2" height="2" fill="#a0a0a0"/>
</svg>
<!-- window border -->
<div class="a" style="left:0;top:0;width:1px;height:716px;background:#2f6fa8"></div><div class="a" style="left:1px;top:0;width:1px;height:716px;background:#8fb4d6"></div>
<div class="a" style="left:0;top:0;width:1002px;height:1px;background:#3b7ab8"></div>
<div class="a" style="left:1000px;top:0;width:2px;height:716px;background:#3b7ab8"></div>
<div class="a" style="left:0;top:714px;width:1002px;height:1px;background:#dff2fa"></div><div class="a" style="left:0;top:715px;width:1002px;height:1px;background:#2f6fa8"></div>
</div>
</body></html>
